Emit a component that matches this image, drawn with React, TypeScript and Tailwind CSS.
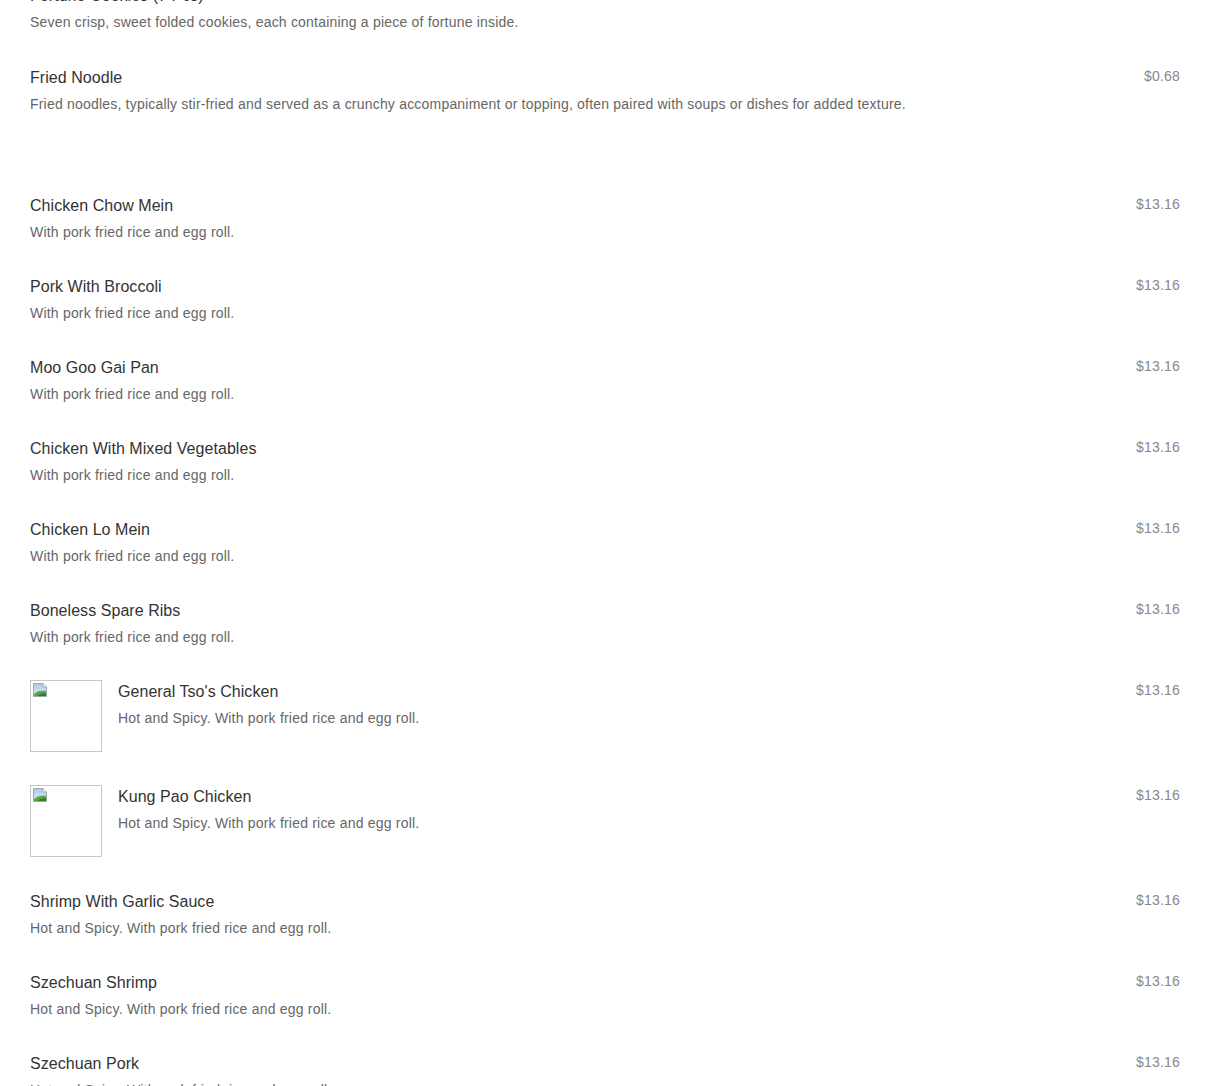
import React from "react";

type Item = { name: string; desc: string; price: string; img?: boolean };

const section1: Item[] = [
  { name: "Fortune Cookies (7 Pcs)", desc: "Seven crisp, sweet folded cookies, each containing a piece of fortune inside.", price: "$1.58" },
  { name: "Fried Noodle", desc: "Fried noodles, typically stir-fried and served as a crunchy accompaniment or topping, often paired with soups or dishes for added texture.", price: "$0.68" },
];

const d1 = "With pork fried rice and egg roll.";
const d2 = "Hot and Spicy. With pork fried rice and egg roll.";

const section2: Item[] = [
  { name: "Chicken Chow Mein", desc: d1, price: "$13.16" },
  { name: "Pork With Broccoli", desc: d1, price: "$13.16" },
  { name: "Moo Goo Gai Pan", desc: d1, price: "$13.16" },
  { name: "Chicken With Mixed Vegetables", desc: d1, price: "$13.16" },
  { name: "Chicken Lo Mein", desc: d1, price: "$13.16" },
  { name: "Boneless Spare Ribs", desc: d1, price: "$13.16" },
  { name: "General Tso's Chicken", desc: d2, price: "$13.16", img: true },
  { name: "Kung Pao Chicken", desc: d2, price: "$13.16", img: true },
  { name: "Shrimp With Garlic Sauce", desc: d2, price: "$13.16" },
  { name: "Szechuan Shrimp", desc: d2, price: "$13.16" },
  { name: "Szechuan Pork", desc: d2, price: "$13.16" },
];

function BrokenImg() {
  return (
    <div className="w-[72px] h-[72px] mb-[1px] shrink-0 border border-[#c8c8c8] mr-[16px] p-[1px]">
      <svg width="16" height="16" viewBox="0 0 16 16">
        <defs>
          <linearGradient id="sky" x1="0" y1="0" x2="0" y2="1">
            <stop offset="0" stopColor="#a9c9e6" />
            <stop offset="1" stopColor="#e2ecf5" />
          </linearGradient>
        </defs>
        <path d="M1.5 1.5 H11 L14.5 5 V14.5 H1.5 Z" fill="url(#sky)" stroke="#9aa6b0" strokeWidth="1" />
        <path d="M11 1.5 V5 H14.5" fill="#fff" stroke="#9aa6b0" strokeWidth="1" />
        <path d="M2 14 L2 12 C5 9 9 8 14 9 L14 14 Z" fill="#5aa544" />
        <path d="M5 14 C8 12 11 11 14 11.5 L14 14 Z" fill="#2f7d24" />
      </svg>
    </div>
  );
}

function Row({ item, pb }: { item: Item; pb: string }) {
  return (
    <div className={`flex justify-between ${pb}`}>
      <div className="flex">
        {item.img && <BrokenImg />}
        <div>
          <div className="pt-[1px] text-[16px] leading-[22px] tracking-[0.05px] text-[#333333]">{item.name}</div>
          <div className="mt-[4px] text-[14px] leading-[22px] tracking-[0.2px] text-[#666666]">{item.desc}</div>
        </div>
      </div>
      <div className="text-[14px] leading-[20px] tracking-[0.2px] text-[#888888] shrink-0 ml-4">{item.price}</div>
    </div>
  );
}

export default function App() {
  return (
    <div
      className="bg-white w-full h-[1086px] overflow-hidden px-[30px]"
      style={{ fontFamily: '"Liberation Sans", Arial, sans-serif' }}
    >
      <div className="-mt-[16px]">
        <Row item={section1[0]} pb="pb-[33px]" />
        <Row item={section1[1]} pb="pb-[32px]" />
      </div>
      <div className="pt-[47px]">
        {section2.map((it) => (
          <Row key={it.name} item={it} pb="pb-[32px]" />
        ))}
      </div>
    </div>
  );
}
